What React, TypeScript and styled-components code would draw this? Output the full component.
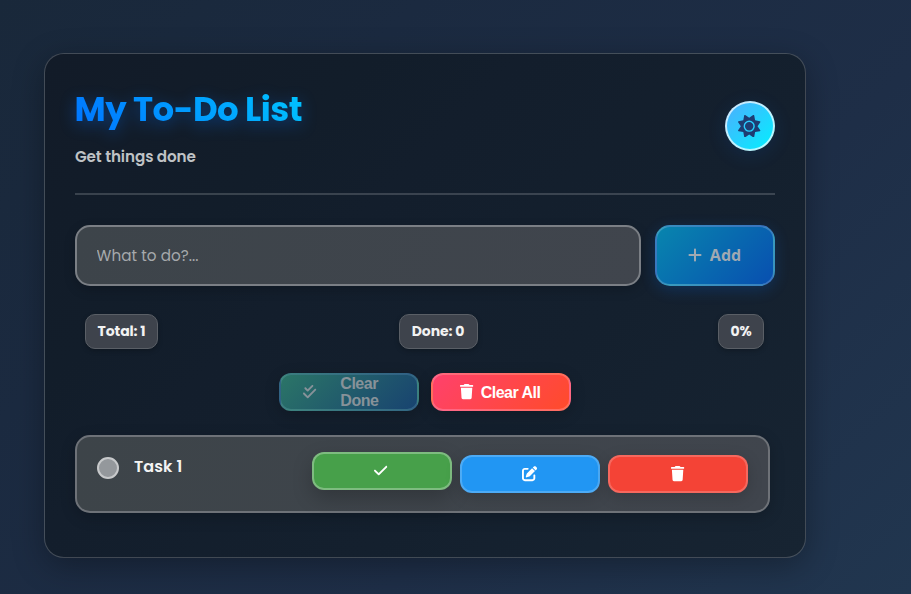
import React from 'react';
import styled, { createGlobalStyle, css } from 'styled-components';
import { FaCheck, FaCheckDouble, FaPenToSquare, FaPlus, FaSun, FaTrash } from 'react-icons/fa6';

const GlobalStyle = createGlobalStyle`
  *, *::before, *::after { box-sizing: border-box; }
  body {
    margin: 0;
    min-height: 100vh;
    overflow: hidden;
    font-family: Poppins, Inter, 'Open Sans', sans-serif;
    background: linear-gradient(135deg, #19283a 0%, #1b2a40 28%, #1e2e47 65%, #21364f 100%);
  }
`;

const Page = styled.main`
  height: 594px;
  padding: 53px 0 0 44px;
`;

const Card = styled.section`
  width: 762px;
  height: 505px;
  padding: 30px;
  border: 1px solid rgba(255, 255, 255, 0.2);
  border-radius: 20px;
  background: linear-gradient(135deg, #121b28 0%, #121d2a 26%, #131e2c 38%, #14202e 65%, #172432 100%);
  box-shadow: 0 8px 32px rgba(0, 0, 0, 0.3);
`;

const Header = styled.header`
  display: flex;
  justify-content: space-between;
  height: 111px;
  border-bottom: 2px solid rgba(255, 255, 255, 0.17);
`;

const Title = styled.h1`
  width: max-content;
  margin: 0;
  font-size: 34px;
  font-weight: 700;
  line-height: 50px;
  letter-spacing: -0.5px;
  text-indent: -0.5px;
  background: linear-gradient(45deg, #0072ff, #00c6ff);
  background-clip: text;
  -webkit-background-clip: text;
  color: transparent;
  filter: drop-shadow(0 4px 8px rgba(0, 114, 255, 0.38));
`;

const Subtitle = styled.p`
  margin: 11px 0 0;
  color: #bfc2c5;
  font-size: 15.2px;
  font-weight: 600;
  line-height: 24px;
  letter-spacing: -0.1px;
`;

const ThemeButton = styled.button`
  display: grid;
  place-items: center;
  width: 50px;
  height: 50px;
  margin-top: 17px;
  padding: 0 1px 0 0;
  border: 2px solid rgba(255, 255, 255, 0.7);
  border-radius: 50%;
  background: linear-gradient(135deg, #4facfe, #00f2fe) border-box;
  box-shadow: 0 4px 20px rgba(0, 114, 255, 0.12);
  color: #1e3c72;
  font-size: 22.4px;
`;

const AddRow = styled.form`
  display: flex;
  gap: 14px;
  margin-top: 30px;
`;

const TaskInput = styled.input`
  width: 566px;
  height: 61px;
  padding: 0 20px;
  border: 2px solid #7b7f85;
  border-radius: 15px;
  outline: 0;
  background: linear-gradient(110deg, #3d444a, #40454d);
  box-shadow: 0 4px 12px rgba(0, 0, 0, 0.18);
  font-family: inherit;
  font-size: 15.2px;
  letter-spacing: 0.06px;
  text-indent: -0.5px;
  color: #fff;
  &::placeholder { color: #a6a9ac; opacity: 1; }
`;

const buttonText = css`
  font-family: 'Liberation Sans', Arial, sans-serif;
  font-size: 16px;
  font-weight: 700;
`;

const AddButton = styled.button`
  ${buttonText}
  display: flex;
  align-items: center;
  justify-content: center;
  gap: 7px;
  width: 120px;
  height: 61px;
  padding: 0 2px 1px 0;
  border: 2px solid rgba(255, 255, 255, 0.2);
  border-radius: 15px;
  background: linear-gradient(135deg, #0885ae, #084fb0);
  box-shadow: 0 4px 15px rgba(0, 114, 255, 0.2);
  color: #9fa9b2;
  font-family: 'Open Sans', sans-serif;
  line-height: 24px;
`;

const Stats = styled.div`
  display: flex;
  justify-content: space-between;
  margin-top: 28px;
  padding: 0 11px 0 10px;
`;

const Stat = styled.span<{ $width: number }>`
  width: ${({ $width }) => $width}px;
  height: 35px;
  border: 1px solid #5a5f66;
  border-radius: 10px;
  background: #3e434c;
  box-shadow: 0 2px 5px rgba(0, 0, 0, 0.22);
  color: #f2f2f2;
  font-size: 14px;
  font-weight: 700;
  line-height: 33px;
  letter-spacing: -0.12px;
  text-align: center;
`;

const BulkActions = styled.div`
  display: flex;
  justify-content: center;
  gap: 12px;
  margin-top: 24px;
`;

const BulkButton = styled.button<{ $muted?: boolean }>`
  ${buttonText}
  display: flex;
  align-items: center;
  justify-content: center;
  gap: ${({ $muted }) => ($muted ? 23.5 : 6)}px;
  width: 140px;
  height: 38px;
  padding: ${({ $muted }) => ($muted ? '0 18px 0 0' : '0 2px 0 0')};
  border: 2px solid rgba(255, 255, 255, 0.2);
  border-radius: 12px;
  background: ${({ $muted }) => $muted
    ? 'linear-gradient(135deg, #2b7567, #184370)'
    : 'linear-gradient(135deg, #ff416c, #ff4b2b)'};
  box-shadow: 0 4px 15px rgba(0, 0, 0, 0.2);
  color: ${({ $muted }) => ($muted ? '#879299' : '#fff')};
  letter-spacing: -0.5px;
  line-height: 17px;
  text-align: left;
  ${({ $muted }) => $muted && css`border-color: rgba(120, 180, 195, 0.25);`}

  svg { font-size: 15.2px; flex-shrink: 0; }
`;

const TaskCard = styled.article`
  display: flex;
  align-items: flex-start;
  width: 695px;
  height: 78px;
  margin-top: 24px;
  padding: 18px 20px 0;
  border: 2px solid #6e7278;
  border-radius: 15px;
  background: linear-gradient(105deg, #3d4449, #40454d);
  box-shadow: 0 4px 15px rgba(0, 0, 0, 0.2);
`;

const StatusCircle = styled.span`
  width: 22px;
  height: 22px;
  margin-top: 2px;
  border: 2px solid #c7c9cb;
  border-radius: 50%;
  background: #94989c;
`;

const TaskName = styled.span`
  flex: 1;
  margin: 0 0 0 15px;
  color: #f3f3f3;
  font-size: 16px;
  font-weight: 600;
  line-height: 24px;
  letter-spacing: 0.1px;
`;

const TaskActions = styled.div`
  display: flex;
  align-items: flex-start;
  gap: 8px;
`;

const IconButton = styled.button<{ $color: string; $raised?: boolean }>`
  display: grid;
  place-items: center;
  width: 140px;
  height: 38px;
  margin-top: ${({ $raised }) => ($raised ? -3 : 0)}px;
  padding: ${({ $raised }) => ($raised ? '0 2px 1px 0' : '0 1px 0 0')};
  border: 2px solid rgba(255, 255, 255, ${({ $raised }) => ($raised ? 0.3 : 0.2)});
  border-radius: 12px;
  background: ${({ $color }) => $color};
  box-shadow: ${({ $raised }) => ($raised ? '0 8px 20px rgba(0, 0, 0, 0.22)' : '0 4px 15px rgba(0, 0, 0, 0.17)')};
  color: white;
  font-size: 15.2px;
`;

export default function App() {
  return (
    <>
      <GlobalStyle />
      <Page>
        <Card>
          <Header>
            <div>
              <Title>My To-Do List</Title>
              <Subtitle>Get things done</Subtitle>
            </div>
            <ThemeButton aria-label="Toggle theme"><FaSun /></ThemeButton>
          </Header>
          <AddRow onSubmit={(event) => event.preventDefault()}>
            <TaskInput placeholder="What to do?..." />
            <AddButton><FaPlus />Add</AddButton>
          </AddRow>
          <Stats>
            <Stat $width={73}>Total: 1</Stat>
            <Stat $width={79}>Done: 0</Stat>
            <Stat $width={46}>0%</Stat>
          </Stats>
          <BulkActions>
            <BulkButton $muted><FaCheckDouble /><span>Clear<br />Done</span></BulkButton>
            <BulkButton><FaTrash />Clear All</BulkButton>
          </BulkActions>
          <TaskCard>
            <StatusCircle />
            <TaskName>Task 1</TaskName>
            <TaskActions>
              <IconButton $color="#47a04a" $raised aria-label="Complete"><FaCheck /></IconButton>
              <IconButton $color="#2196f3" aria-label="Edit"><FaPenToSquare /></IconButton>
              <IconButton $color="#f44336" aria-label="Delete"><FaTrash /></IconButton>
            </TaskActions>
          </TaskCard>
        </Card>
      </Page>
    </>
  );
}
